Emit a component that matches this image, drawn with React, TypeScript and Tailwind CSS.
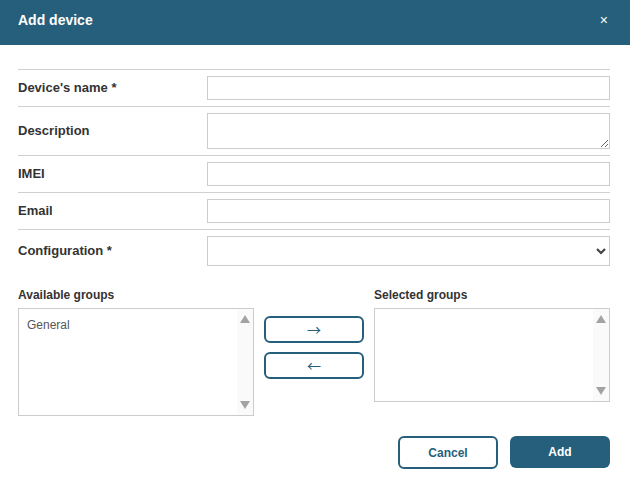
import React from "react";

const fields = [
  { label: "Device's name *", kind: "input" },
  { label: "Description", kind: "textarea" },
  { label: "IMEI", kind: "input" },
  { label: "Email", kind: "input" },
  { label: "Configuration *", kind: "select" },
];

const ScrollBar = () => (
  <div className="flex w-[16px] flex-col items-center justify-between bg-[#fafafa] py-[6px]">
    <svg width="10" height="8" viewBox="0 0 10 8">
      <path d="M5 0 L10 8 L0 8 Z" fill="#a3a3a3" />
    </svg>
    <svg width="10" height="8" viewBox="0 0 10 8">
      <path d="M0 0 L10 0 L5 8 Z" fill="#a3a3a3" />
    </svg>
  </div>
);

export default function App() {
  return (
    <div className="h-[488px] w-[630px] bg-white font-['Liberation_Sans',Arial,sans-serif] text-[#333]">
      {/* header */}
      <div className="flex h-[45px] items-center justify-between bg-[#265f7b] pb-[4px] pl-[18px] pr-[22px] text-white">
        <span className="text-[14px] font-bold">Add device</span>
        <span className="text-[14px]">×</span>
      </div>

      <div className="pl-[18px] pr-[20px] pt-[24px]">
        {fields.map((f, i) => (
          <div key={i} className="grid grid-cols-[189px_1fr] items-center border-t border-[#d0d0d0] py-[6px]">
            <label className="text-[13px] font-bold">{f.label}</label>
            {f.kind === "input" && (
              <input className="h-[24px] w-full border border-[#cccccc] bg-white outline-none" />
            )}
            {f.kind === "textarea" && (
              <textarea className="block h-[36px] w-full border border-[#cccccc] bg-white outline-none" />
            )}
            {f.kind === "select" && (
              <div className="relative h-[30px] w-full border border-[#cccccc] bg-white">
                <svg className="absolute right-[3px] top-[11px]" width="10" height="7" viewBox="0 0 10 7">
                  <path d="M1 1 L5 5 L9 1" stroke="#444" strokeWidth="2.2" fill="none" />
                </svg>
              </div>
            )}
          </div>
        ))}

        {/* groups */}
        <div className="mt-[14px] flex gap-[10px]">
          <div className="w-[236px]">
            <div className="mb-[4px] text-[12px] font-bold">Available groups</div>
            <div className="flex h-[108px] border border-[#cccccc]">
              <div className="flex-1 px-[8px] pt-[7px] text-[12px] text-[#555]">General</div>
              <ScrollBar />
            </div>
          </div>
          <div className="mt-[30px] flex w-[100px] flex-col gap-[9px]">
            <button className="flex h-[27px] items-center justify-center rounded-[6px] border-2 border-[#265f7b] font-['Noto_Sans_CJK_JP',sans-serif] text-[14px] text-[#265f7b]">
              →
            </button>
            <button className="flex h-[27px] items-center justify-center rounded-[6px] border-2 border-[#265f7b] font-['Noto_Sans_CJK_JP',sans-serif] text-[14px] text-[#265f7b]">
              ←
            </button>
          </div>
          <div className="w-[236px]">
            <div className="mb-[4px] text-[12px] font-bold">Selected groups</div>
            <div className="flex h-[94px] border border-[#cccccc]">
              <div className="flex-1" />
              <ScrollBar />
            </div>
          </div>
        </div>

        {/* footer */}
        <div className="mt-[20px] flex justify-end gap-[12px]">
          <button className="h-[33px] w-[100px] rounded-[6px] border-2 border-[#265f7b] text-[12px] font-bold text-[#265f7b]">
            Cancel
          </button>
          <button className="h-[32px] w-[100px] rounded-[6px] bg-[#265f7b] text-[12px] font-bold text-white">
            Add
          </button>
        </div>
      </div>
    </div>
  );
}
